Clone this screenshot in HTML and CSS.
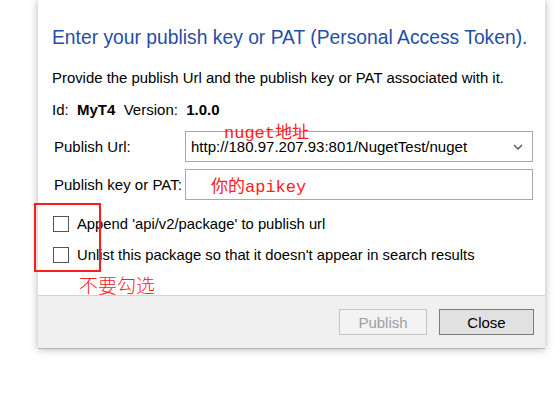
FILE: index.html
```html
<!DOCTYPE html>
<html>
<head>
<meta charset="utf-8">
<link rel="stylesheet" href="styles.css">
</head>
<body>
<div class="page">
  <div class="dialog">
    <div class="content">
      <h1 class="title">Enter your publish key or PAT (Personal Access Token).</h1>
      <p class="desc">Provide the publish Url and the publish key or PAT associated with it.</p>
      <p class="meta">Id:&nbsp; <b>MyT4</b>&nbsp; Version:&nbsp; <b>1.0.0</b></p>
      <div class="form">
        <span class="label">Publish Url:</span>
        <div class="combo">
          <span class="combo-text">http://180.97.207.93:801/NugetTest/nuget</span>
          <svg class="chev" width="10" height="6" viewBox="0 0 10 6"><path d="M1 1 L5 5 L9 1" fill="none" stroke="#505050" stroke-width="1.3"/></svg>
        </div>
        <span class="label">Publish key or PAT:</span>
        <div class="input"></div>
      </div>
      <div class="checks">
        <label class="check"><span class="box"></span><span>Append 'api/v2/package' to publish url</span></label>
        <label class="check"><span class="box"></span><span>Unlist this package so that it doesn't appear in search results</span></label>
      </div>
    </div>
    <div class="footer">
      <button class="btn btn-disabled">Publish</button>
      <button class="btn btn-close">Close</button>
    </div>
  </div>
  <div class="note note-url">nuget地址</div>
  <div class="note note-key">你的apikey</div>
  <div class="note note-uncheck">不要勾选</div>
  <div class="redbox"></div>
</div>
</body>
</html>
```
FILE: styles.css
```css
html, body {
  margin: 0;
  padding: 0;
  background: #ffffff;
}
body {
  font-family: "Liberation Sans", Arial, sans-serif;
  color: #000;
}
.page {
  position: relative;
  width: 554px;
  height: 405px;
  padding-left: 38px;
  box-sizing: border-box;
}
.dialog {
  width: 507px;
  height: 349px;
  background: #fff;
  display: flex;
  flex-direction: column;
  box-shadow: 0 0 8px rgba(0,0,0,0.3);
  border-bottom: 1px solid #b4b4b4;
  box-sizing: border-box;
}
.content {
  height: 295px;
  padding: 25px 12px 0 14px;
  box-sizing: border-box;
  display: flex;
  flex-direction: column;
}
.title {
  margin: 0;
  font-weight: normal;
  font-size: 19.3px;
  line-height: 26px;
  color: #1f4fa6;
  white-space: nowrap;
}
.desc {
  margin: 17px 0 0;
  font-size: 14.9px;
  line-height: 20px;
  white-space: nowrap;
}
.meta {
  margin: 12px 0 0;
  font-size: 15px;
  line-height: 20px;
}
.form {
  margin-top: 11px;
  display: grid;
  grid-template-columns: 133px 348px;
  grid-template-rows: 31px 31px;
  row-gap: 7px;
  align-items: center;
}
.label {
  font-size: 15px;
  padding-left: 2px;
}
.combo, .input {
  height: 31px;
  box-sizing: border-box;
  border: 1px solid #a8a8a8;
  background: #fff;
}
.combo {
  display: flex;
  align-items: center;
  justify-content: space-between;
  padding: 0 9px 0 5px;
  font-size: 15px;
}
.checks {
  margin-top: 14px;
  display: flex;
  flex-direction: column;
  gap: 11px;
}
.check {
  display: flex;
  align-items: center;
  height: 20px;
  font-size: 14.8px;
  padding-left: 1px;
}
.box {
  width: 16px;
  height: 16px;
  box-sizing: border-box;
  border: 1px solid #555;
  margin-right: 8px;
  background: #fff;
}
.footer {
  flex: 1;
  background: #f0f0f0;
  border-top: 1px solid #d4d4d4;
  display: flex;
  justify-content: flex-end;
  align-items: flex-start;
  gap: 12px;
  padding: 13px 11px 0 0;
}
.btn {
  height: 26px;
  font-family: "Liberation Sans", Arial, sans-serif;
  font-size: 15px;
  padding: 0;
  margin: 0;
}
.btn-disabled {
  width: 88px;
  background: #f3f3f3;
  border: 1px solid #c4c4c4;
  color: #a0a0a0;
}
.btn-close {
  width: 95px;
  background: #e1e1e1;
  border: 1px solid #7a7a7a;
  color: #000;
}
.note {
  position: absolute;
  color: #ff2020;
  font-family: "Liberation Mono", "Noto Sans CJK SC", monospace;
  font-size: 17px;
  line-height: 20px;
  white-space: nowrap;
}
.note-url { left: 224px; top: 124px; }
.note-key { left: 211px; top: 178px; }
.note-uncheck {
  left: 79px;
  top: 274px;
  font-family: "Noto Sans CJK SC", sans-serif;
  font-size: 19px;
  font-weight: 300;
  line-height: 22px;
}
.redbox {
  position: absolute;
  left: 34px;
  top: 203px;
  width: 67px;
  height: 69px;
  box-sizing: border-box;
  border: 2px solid #ff1a1a;
}
```
